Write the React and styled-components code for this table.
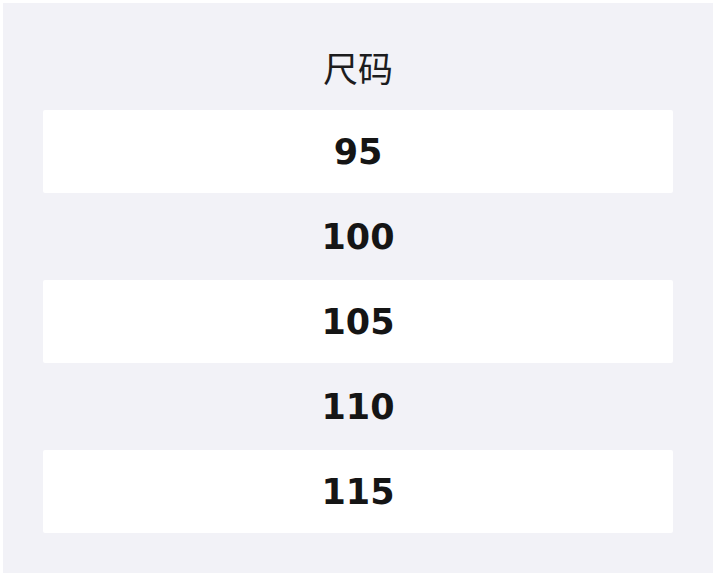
import React from 'react'
import styled, { createGlobalStyle } from 'styled-components'

const GlobalStyle = createGlobalStyle`
  body {
    margin: 3px;
    background: #ffffff;
    font-family: "DejaVu Sans", "Noto Sans CJK SC", sans-serif;
  }
`

const Panel = styled.div`
  width: 710px;
  height: 570px;
  box-sizing: border-box;
  background: #f2f2f7;
  padding: 22px 40px 40px;
  display: flex;
  flex-direction: column;
  gap: 2px;
`

const Header = styled.div`
  height: 83px;
  display: flex;
  align-items: center;
  justify-content: center;
  font-family: "Noto Sans CJK SC", "DejaVu Sans", sans-serif;
  font-size: 35px;
  color: #1c1c1e;
`

const Row = styled.div`
  height: 83px;
  display: flex;
  align-items: center;
  justify-content: center;
  border-radius: 2px;
  background: ${(p) => (p.$striped ? '#ffffff' : 'transparent')};
  font-family: "DejaVu Sans", sans-serif;
  font-weight: bold;
  font-size: 35px;
  color: #151515;
`

const sizes = ['95', '100', '105', '110', '115']

export default function App() {
  return (
    <>
      <GlobalStyle />
      <Panel>
        <Header>尺码</Header>
        {sizes.map((s, i) => (
          <Row key={s} $striped={i % 2 === 0}>
            {s}
          </Row>
        ))}
      </Panel>
    </>
  )
}
